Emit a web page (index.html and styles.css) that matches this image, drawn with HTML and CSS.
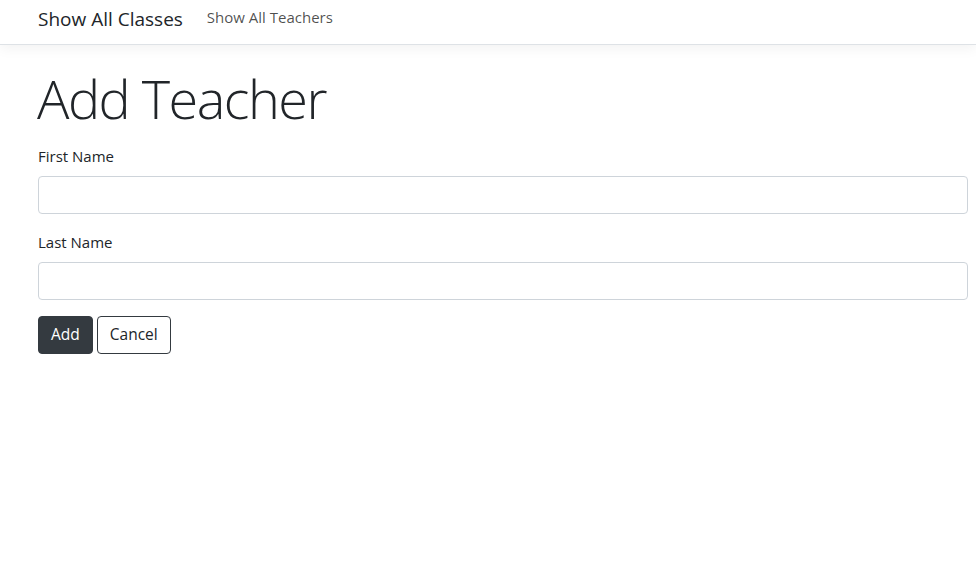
FILE: index.html
```html
<!DOCTYPE html>
<html>
<head>
<meta charset="utf-8">
<link rel="stylesheet" href="styles.css">
</head>
<body>
<nav class="navbar">
  <a class="brand" href="#">Show All Classes</a>
  <a class="nav-link" href="#">Show All Teachers</a>
</nav>
<main class="container">
  <h1 class="title">Add Teacher</h1>
  <form class="form">
    <div class="group">
      <label class="label">First Name</label>
      <input class="input" type="text">
    </div>
    <div class="group">
      <label class="label">Last Name</label>
      <input class="input" type="text">
    </div>
    <div class="actions">
      <button type="button" class="btn btn-dark">Add</button>
      <button type="button" class="btn btn-outline">Cancel</button>
    </div>
  </form>
</main>
</body>
</html>
```
FILE: styles.css
```css
* { box-sizing: border-box; }
html, body { margin: 0; padding: 0; }
body {
  font-family: "Open Sans", "Noto Sans", sans-serif;
  font-size: 15px;
  line-height: 1.5;
  color: #212529;
  background: #fff;
}
.navbar {
  height: 45px;
  display: flex;
  align-items: center;
  padding: 0 38px;
  border-bottom: 1px solid #dee2e6;
  box-shadow: 0 4px 12px rgba(0,0,0,0.05);
  background: #fff;
}
.brand {
  font-size: 19px;
  color: #212529;
  text-decoration: none;
  margin-right: 24px;
  margin-top: -6px;
}
.nav-link {
  font-size: 15px;
  color: rgba(0,0,0,0.7);
  text-decoration: none;
  margin-top: -9px;
}
.container {
  padding: 0 8px 0 38px;
}
.title {
  font-weight: 300;
  font-size: 54px;
  line-height: 1.2;
  margin: 21px 0 13px -1px;
  letter-spacing: -1.5px;
}
.group { margin-bottom: 16px; }
.label {
  display: block;
  margin-bottom: 8px;
  line-height: 24px;
}
.input {
  display: block;
  width: 100%;
  height: 38px;
  border: 1px solid #ced4da;
  border-radius: 4px;
  background: #fff;
  font: inherit;
  padding: 6px 12px;
}
.actions { display: flex; gap: 4px; }
.btn {
  font: inherit;
  font-size: 15.5px;
  height: 38px;
  padding: 0 12px;
  border-radius: 4px;
  cursor: pointer;
}
.btn-dark {
  background: #343a40;
  border: 1px solid #343a40;
  color: #fff;
}
.btn-outline {
  background: #fff;
  border: 1px solid #343a40;
  color: #212529;
}
```
